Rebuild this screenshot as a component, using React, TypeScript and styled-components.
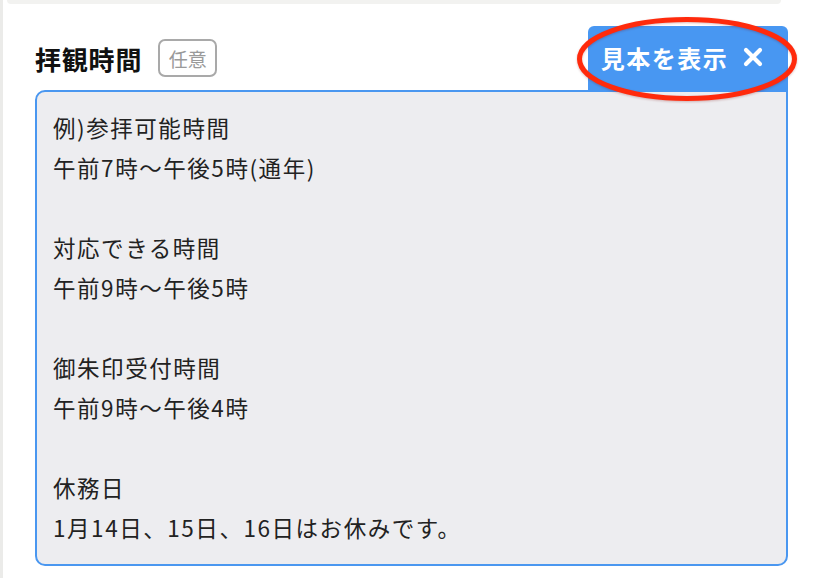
import { createGlobalStyle, styled } from 'styled-components';

const GlobalStyle = createGlobalStyle`
  html,
  body {
    margin: 0;
    padding: 0;
    background: #ffffff;
  }

  body {
    font-family: 'Noto Sans CJK JP', 'Noto Sans', sans-serif;
    color: #222222;
  }
`;

const SAMPLE_TEXT = `例)参拝可能時間
午前7時〜午後5時(通年)

対応できる時間
午前9時〜午後5時

御朱印受付時間
午前9時〜午後4時

休務日
1月14日、15日、16日はお休みです。`;

interface LabelProps {
  title: string;
  optional?: boolean;
}

const FieldLabel = ({ title, optional }: LabelProps) => (
  <LabelBox>
    <TitleSpan>{title}</TitleSpan>
    {optional && <OptionalTag>任意</OptionalTag>}
  </LabelBox>
);

const CloseIcon = () => (
  <svg width="20" height="20" viewBox="0 0 20 20" aria-hidden="true">
    <path d="M3 3 L17 17 M17 3 L3 17" stroke="#ffffff" strokeWidth="4.2" strokeLinecap="round" />
  </svg>
);

// 注釈用の赤い楕円（スクリーンショット上のマーク）
const Highlight = () => (
  <HighlightSvg width="230" height="92" viewBox="0 0 230 92" aria-hidden="true">
    <ellipse cx="115" cy="46" rx="107.5" ry="39.5" fill="none" stroke="#ff2a0c" strokeWidth="5" />
  </HighlightSvg>
);

export default function App() {
  return (
    <>
      <GlobalStyle />
      <PageLayout>
        <PrevCardBox />
        <FieldSection>
          <HeaderRow>
            <FieldLabel title="拝観時間" optional />
            <SampleButton type="button">
              見本を表示
              <CloseIcon />
            </SampleButton>
            <Highlight />
          </HeaderRow>
          <SampleArea>{SAMPLE_TEXT}</SampleArea>
        </FieldSection>
      </PageLayout>
    </>
  );
}

const PageLayout = styled.div`
  display: flex;
  flex-direction: column;

  width: 820px;
  height: 578px;
  border-left: 3px solid #ebebe9;
  box-sizing: border-box;

  background: #ffffff;
`;

const PrevCardBox = styled.div`
  width: 774px;
  height: 4px;
  margin-left: 4px;
  border-radius: 0 0 9px 9px;

  background: #f2f2f0;
`;

const FieldSection = styled.section`
  display: flex;
  flex-direction: column;

  width: 753px;
  margin: 22px 0 0 32px;
`;

const HeaderRow = styled.div`
  display: flex;
  justify-content: space-between;
  align-items: center;
  position: relative;

  height: 64px;
`;

const LabelBox = styled.div`
  display: flex;
  gap: 16px;
  align-items: center;
`;

const TitleSpan = styled.span`
  font-size: 26px;
  font-weight: 700;
  letter-spacing: 0.8px;
  color: #111111;
`;

const OptionalTag = styled.span`
  display: flex;
  justify-content: center;
  align-items: center;

  width: 59px;
  height: 38px;
  border: 2px solid #a9a9a9;
  border-radius: 7px;
  box-sizing: border-box;

  font-size: 19px;
  color: #9a9a9a;
`;

const SampleButton = styled.button`
  display: flex;
  gap: 15px;
  align-items: center;
  justify-content: center;
  align-self: stretch;

  width: 200px;
  margin-bottom: -2px;
  padding: 0 12px 4px 0;
  border: none;
  border-radius: 6px 6px 0 0;

  background: #4897f2;

  font-family: inherit;
  font-size: 24px;
  font-weight: 700;
  letter-spacing: 1.5px;
  color: #ffffff;
  cursor: pointer;
`;

const HighlightSvg = styled.svg`
  position: absolute;
  top: -13px;
  right: -14px;

  filter: drop-shadow(0 1px 1px rgba(120, 0, 0, 0.25));
  pointer-events: none;
`;

const SampleArea = styled.div`
  height: 476px;
  padding: 15px 16px 17px;
  border: 2px solid #4a97f0;
  border-radius: 10px 0 10px 10px;
  box-sizing: border-box;

  background: #ededf0;

  font-size: 22.5px;
  line-height: 40px;
  letter-spacing: 1.55px;
  color: #222222;
  white-space: pre-wrap;
`;
